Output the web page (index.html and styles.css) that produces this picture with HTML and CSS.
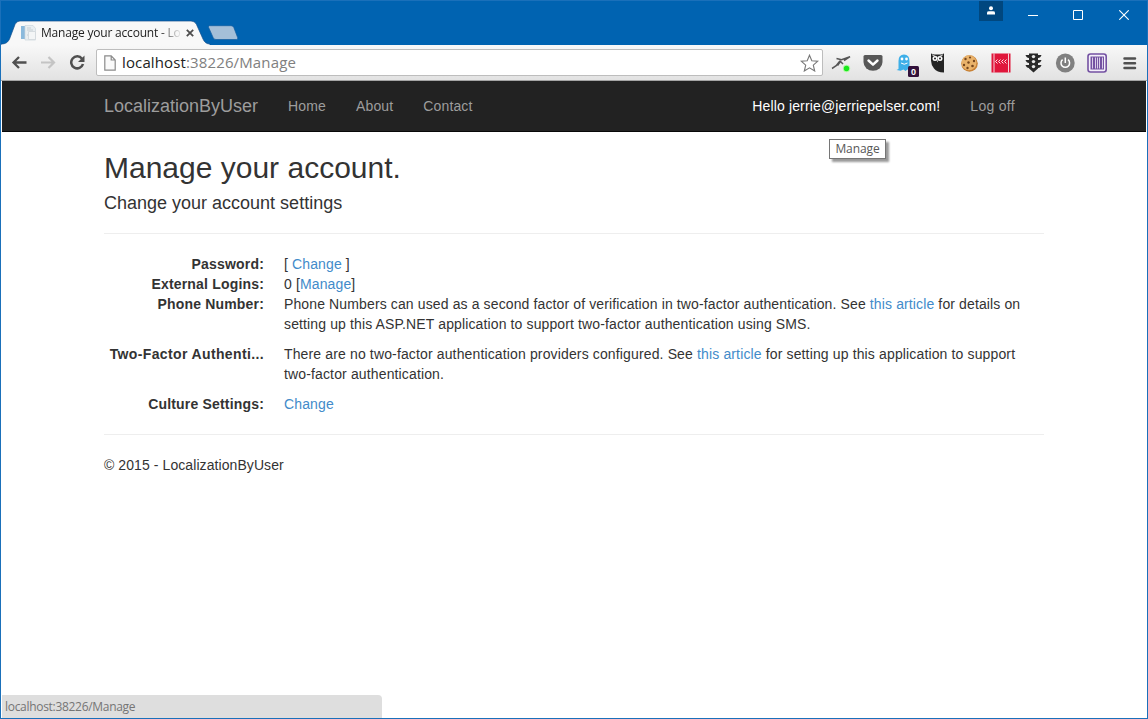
FILE: index.html
```html
<!DOCTYPE html>
<html lang="en">
<head>
<meta charset="utf-8">
<title>Manage your account - LocalizationByUser</title>
<link rel="stylesheet" href="styles.css">
</head>
<body>
<div class="window">
  <div class="titlebar">
    <div class="tab">
      <svg class="tab-shape" width="211" height="25" viewBox="0 0 211 25"><path d="M0 27V24C5 24 7 22 8.500 19L14 4.500Q15.500 1 19 1H190Q194 1 195.500 4.500L202 19Q204 24 209 24V27Z" fill="#f8f8f8" stroke="#124f8d" stroke-width=".7"/></svg>
      <svg class="favicon" width="16" height="16" viewBox="0 0 16 16"><path d="M0 1h4v13H0z" fill="#8ab9dc"/><path d="M4 .5h8l2.500 3V15H4z" fill="#e9eef1" stroke="#cbd5dc" stroke-width=".7"/><path d="M6 3h4M6 5h6M6 10h2M10 11h3" stroke="#c6ced3"/><path d="M7.500 6.500h7v8h-7z" fill="#f3f5f6" stroke="#d5dbdf"/></svg>
      <span class="tab-title">Manage your account - Lo</span>
      <svg class="tab-close" width="8" height="8" viewBox="0 0 8 8"><path d="M.8.8l6.400 6.400M7.200.8L.8 7.200" stroke="#4d4d4d" stroke-width="1.800"/></svg>
    </div>
    <svg class="new-tab" width="32" height="16" viewBox="0 0 32 16"><path d="M2.500.7h21.500q2 0 2.700 1.500l4 10.500q.5 1.800-1 1.800H9q-2 0-2.700-1.600L1.500 2.200Q1 .7 2.500.7z" fill="#a5bfd8" stroke="#125b9f" stroke-width=".7"/></svg>
    <div class="controls">
      <div class="user"><svg width="10" height="10" viewBox="0 0 10 10"><circle cx="5" cy="2.200" r="2" fill="#fff"/><path d="M1 8.500V6.700Q1 5.300 3 5.300h4q2 0 2 1.400v1.800z" fill="#fff"/></svg></div>
      <svg class="minimize" width="10" height="10" viewBox="0 0 10 10"><path d="M0 5.500h10" stroke="#fff"/></svg>
      <svg class="maximize" width="10" height="10" viewBox="0 0 10 10"><path d="M.5.5h9v9h-9z" fill="none" stroke="#fff"/></svg>
      <svg class="close" width="10" height="10" viewBox="0 0 10 10"><path d="M.3.3l9.400 9.400M9.700.3L.3 9.700" stroke="#fff" stroke-width="1.100"/></svg>
    </div>
  </div>
  <div class="toolbar">
    <svg class="nav-icon" width="16" height="16" viewBox="0 0 16 16"><path d="M15.500 8.500H2M8 3L2.500 8.500 8 14" fill="none" stroke="#505050" stroke-width="2.300"/></svg>
    <svg class="nav-icon" width="16" height="16" viewBox="0 0 16 16"><path d="M1 8.500h13M8.500 3l5.500 5.500L8.500 14" fill="none" stroke="#c4c4c4" stroke-width="2.200"/></svg>
    <svg class="nav-icon" width="16" height="16" viewBox="0 0 16 16"><path d="M13 4.700A6 6 0 1 0 14 10" fill="none" stroke="#505050" stroke-width="2.500"/><path d="M15.500 1.500v6.500H9z" fill="#505050"/></svg>
    <div class="omnibox">
      <svg width="12" height="16" viewBox="0 0 12 16"><path d="M.8.8h6.400L11.200 5v10.200H.8zM7.200.8V5h4" fill="#fafafa" stroke="#8a8a8a" stroke-width="1.200"/></svg>
      <span class="url"><b>localhost</b>:38226/Manage</span>
      <svg class="star" width="19" height="18" viewBox="0 0 19 18"><path d="M9.500 1.200l2.300 5.500 6 .5-4.500 4 1.400 5.800-5.200-3.100L4.300 17l1.400-5.800-4.500-4 6-.5z" fill="#fff" stroke="#777" stroke-width="1.100"/></svg>
    </div>
    <div class="extensions">
      <svg width="20" height="20" viewBox="0 0 20 20"><path d="M5.500 5.500l5 1.200 8.500-3-6 4M1 15.500q5-2.500 8-7.500l3 3M9 9l-2.500 3.500" fill="none" stroke="#555" stroke-width="1.500"/><circle cx="15.500" cy="15.500" r="3.700" fill="#b4f7a8"/><circle cx="15.500" cy="15.500" r="2.700" fill="#18e81b"/></svg>
      <svg width="20" height="20" viewBox="0 0 20 20"><path d="M2 2h16q1.500 0 1.500 1.500V9a9.500 8.800 0 0 1-19 0V3.500Q.5 2 2 2z" fill="#585858"/><path d="M5.500 7.500l4.500 4.200 4.500-4.200" fill="none" stroke="#fff" stroke-width="2.400" stroke-linecap="round" stroke-linejoin="round"/></svg>
      <svg width="24" height="24" viewBox="0 0 24 24"><path d="M3.500 16V8Q3.500 1.500 9 1.500T14.500 8v5l2 4-4-.5-2 1.500-2-1.500-3 1.200-4-.7z" fill="#3eafe8"/><circle cx="7" cy="6" r="1.400" fill="#fff"/><circle cx="11.500" cy="6" r="1.400" fill="#fff"/><path d="M6 10q3.200 2.500 6.500 0" fill="none" stroke="#fff"/><rect x="13" y="13" width="11" height="11" rx="1.500" fill="#32113a"/><text x="18.500" y="22" text-anchor="middle" class="badge">0</text></svg>
      <svg width="20" height="20" viewBox="0 0 20 20"><path d="M4 .5l3 1h7l3-1v19q-7 0-10-4-3-4-3-8z" fill="#242424"/><circle cx="8" cy="5.500" r="2.500" fill="#fff"/><circle cx="13" cy="5.500" r="2.500" fill="#fff"/><circle cx="8" cy="5.500" r="1" fill="#222"/><circle cx="13" cy="5.500" r="1" fill="#222"/><path d="M5 1.800l5.500 2.500L16 1.800" fill="none" stroke="#eee" stroke-width=".8"/><path d="M9.800 7.500h1.400l-.7 1.800z" fill="#fff"/></svg>
      <svg width="20" height="20" viewBox="0 0 20 20"><circle cx="10.500" cy="10.500" r="8.300" fill="#c98236"/><circle cx="10" cy="9.700" r="7.500" fill="#e9b26a"/><g fill="#74451d"><circle cx="6.500" cy="6" r="1.200"/><circle cx="11" cy="4.500" r="1.100"/><circle cx="15" cy="8" r="1.200"/><circle cx="9.500" cy="9.500" r="1.200"/><circle cx="5" cy="12" r="1.200"/><circle cx="13.500" cy="13" r="1.300"/><circle cx="8.500" cy="15" r="1.200"/></g></svg>
      <svg width="20" height="20" viewBox="0 0 20 20"><path d="M.5.500h19v19H.5z" fill="#e0163b"/><path d="M3 .5v19M17.500 .5v19" stroke="#fff" stroke-width=".8"/><path d="M6.500 6.500l-2 2 2 2M9.500 6.500l-2 2 2 2M12.500 6.500l-2 2 2 2M15.500 6.500l-2 2 2 2" fill="none" stroke="#fff" stroke-width=".9"/></svg>
      <svg width="20" height="20" viewBox="0 0 20 20"><path d="M6 .5h9v15l-4.500 4-4.500-4z" fill="#292929"/><path d="M2.500 2H6v3Q3.500 5 2.500 2zM2.500 7H6v3Q3.500 10 2.500 7zM2.500 12H6v3q-2.500 0-3.500-3zM18.500 2H15v3q2.500 0 3.500-3zM18.500 7H15v3q2.500 0 3.500-3zM18.500 12H15v3q2.500 0 3.500-3z" fill="#292929"/><g fill="#e8e8e8"><circle cx="10.500" cy="3.600" r="1.700"/><circle cx="10.500" cy="8.600" r="1.700"/><circle cx="10.500" cy="13.600" r="1.700"/></g></svg>
      <svg width="20" height="20" viewBox="0 0 20 20"><circle cx="10.300" cy="10" r="9.400" fill="#808080"/><path d="M7.600 6.700a4.300 4.300 0 1 0 5.400 0M10.300 4.500V10" fill="none" stroke="#fff" stroke-width="1.500"/></svg>
      <svg width="20" height="20" viewBox="0 0 20 20"><rect x="1" y="1" width="18.200" height="18" rx="2.500" fill="#f4effa" stroke="#7452a2" stroke-width="1.600"/><path d="M3.500 3.500h13.500v13H3.500z" fill="#7452a2"/><path d="M5.500 4.500V15.500M8.500 4.500V15.500M10.500 4.500V15.500M12.500 4.500V15.500M15.500 4.500V15.500" stroke="#e5ddef" stroke-width=".9"/></svg>
      <svg width="20" height="20" viewBox="0 0 20 20"><path d="M5.500 5.500h10.500M5.500 10.200h10.500M5.500 15h10.500" stroke="#505050" stroke-width="2.500" stroke-linecap="round"/></svg>
    </div>
  </div>
  <div class="page">
    <nav class="navbar">
      <div class="container nav-row">
        <a class="brand">LocalizationByUser</a>
        <a class="nav-link home">Home</a>
        <a class="nav-link about">About</a>
        <a class="nav-link contact">Contact</a>
        <a class="nav-link hello">Hello jerrie@jerriepelser.com!</a>
        <a class="nav-link logoff">Log off</a>
      </div>
      <div class="tooltip">Manage</div>
    </nav>
    <main class="container">
      <h2>Manage your account.</h2>
      <h4>Change your account settings</h4>
      <hr>
      <dl>
        <dt>Password:</dt><dd>[ <a>Change</a> ]</dd>
        <dt>External Logins:</dt><dd>0 [<a>Manage</a>]</dd>
        <dt>Phone Number:</dt><dd class="para">Phone Numbers can used as a second factor of verification in two-factor authentication. See <a>this article</a> for details on<br>setting up this ASP.NET application to support two-factor authentication using SMS.</dd>
        <dt class="truncated">Two-Factor Authenti...</dt><dd class="para factor">There are no two-factor authentication providers configured. See <a>this article</a> for setting up this application to support<br>two-factor authentication.</dd>
        <dt>Culture Settings:</dt><dd><a>Change</a></dd>
      </dl>
      <hr>
      <footer>© 2015 - LocalizationByUser</footer>
    </main>
    <div class="status">localhost:38226/Manage</div>
  </div>
</div>
</body>
</html>
```
FILE: styles.css
```css
* { box-sizing: border-box; }
body { margin: 0; font: 14px/20px "Liberation Sans", Arial, sans-serif; color: #333; }
svg { display: block; flex: none; }
.window { width: 1148px; height: 719px; border: 1px solid #1a70ba; background: #fff; display: flex; flex-direction: column; overflow: hidden; }
.titlebar { height: 44px; flex: none; background: #0063b1; display: flex; align-items: flex-start; }
.tab { position: relative; width: 206px; height: 25px; margin-top: 19px; padding: 5px 0 0 20px; display: flex; align-items: flex-start; font: 12px/16px "Open Sans", "Noto Sans", sans-serif; color: #222; }
.tab-shape { position: absolute; left: 0; top: 0; }
.favicon, .tab-title, .tab-close { position: relative; }
.tab-title { width: 141px; margin-left: 4px; white-space: nowrap; letter-spacing: -.2px; -webkit-mask-image: linear-gradient(90deg, #000 118px, transparent 141px); mask-image: linear-gradient(90deg, #000 118px, transparent 141px); }
.tab-close { margin: 4px 0 0 4px; }
.new-tab { margin-top: 24px; }
.controls { margin-left: auto; display: flex; color: #fff; }
.user { width: 24px; height: 20px; background: #00477f; display: flex; justify-content: center; padding-top: 5px; }
.minimize { margin: 9px 0 0 25px; }
.maximize { margin: 9px 0 0 35px; }
.close { margin: 9px 18px 0 36px; }
.toolbar { height: 36px; flex: none; background: linear-gradient(#f8f8f8, #e2e2e2); border-bottom: 1px solid #a5a5a5; padding: 4px 0 0 10px; display: flex; align-items: flex-start; }
.nav-icon { margin: 5px 13px 0 0; }
.toolbar .nav-icon:nth-child(3) { margin-right: 11px; }
.omnibox { flex: none; width: 727px; height: 27px; background: #fff; border: 1px solid #bdbdbd; border-radius: 2px; display: flex; align-items: center; padding: 0 3px 0 7px; }
.url { font: 15px/22px "Open Sans", "Noto Sans", sans-serif; letter-spacing: .13px; color: #808080; margin: -2px 0 0 6px; }
.url b { color: #222; font-weight: 400; }
.star { margin-left: auto; }
.extensions { flex: none; display: grid; grid-template-columns: repeat(10, 32px); width: 320px; margin: 4px 0 0 8px; height: 24px; }
.badge { font: bold 9px "Liberation Sans", sans-serif; fill: #fff; }
.page { margin: 0 1px; flex: 1; position: relative; }
.navbar { height: 51px; background: #222; border-bottom: 1px solid #080808; position: relative; }
.container { width: 940px; margin: 0 auto; }
.nav-row { display: flex; height: 50px; align-items: center; color: #9d9d9d; padding-right: 29px; }
.brand { font-size: 18px; margin-right: 30px; }
.nav-link { letter-spacing: .14px; }
.home, .about { margin-right: 30px; }
.hello { margin-left: auto; margin-right: 30px; color: #fff; }
.logoff { letter-spacing: .3px; }
.tooltip { position: absolute; left: 827px; top: 58px; width: 57px; height: 20px; border: 1px solid #767676; background: #fff; color: #575757; box-shadow: 3px 3px 2px rgba(0,0,0,.4); font: 12px/18px "Open Sans", "Noto Sans", sans-serif; letter-spacing: -.1px; text-align: center; }
h2, h4 { font-weight: 400; }
h2 { font-size: 30px; line-height: 33px; margin: 19px 0 9px; }
h4 { font-size: 18px; line-height: 20px; margin: 0 0 20px; }
hr { border: 0; border-top: 1px solid #eee; margin: 20px 0; }
dl { display: grid; grid-template-columns: 160px 760px; column-gap: 20px; margin: 0; letter-spacing: .125px; }
dt { font-weight: 700; text-align: right; white-space: nowrap; letter-spacing: .18px; }
.truncated { letter-spacing: .37px; }
dd { margin: 0; white-space: nowrap; }
dd a { color: #428bca; }
.para { margin-bottom: 10px; }
.factor { letter-spacing: .14px; }
footer { letter-spacing: .08px; }
.status { position: absolute; left: 0; bottom: 0; width: 380px; height: 23px; padding-left: 3px; background: #dedede; color: #757575; border-top-right-radius: 4px; font: 12px/23px "Open Sans", "Noto Sans", sans-serif; letter-spacing: -.3px; }
```
